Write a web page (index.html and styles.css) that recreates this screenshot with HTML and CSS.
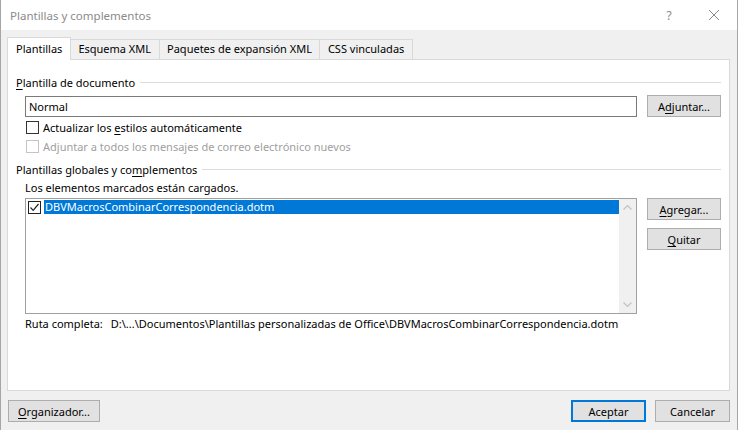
FILE: index.html
```html
<!DOCTYPE html>
<html lang="es">
<head>
<meta charset="utf-8">
<title>Plantillas y complementos</title>
<link rel="stylesheet" href="styles.css">
</head>
<body>
<div class="window">
  <div class="titlebar">
    <span class="title">Plantillas y complementos</span>
    <span class="help">?</span>
    <span class="close"><svg width="12" height="12" viewBox="0 0 12 12"><path d="M1 1 L11 11 M11 1 L1 11" stroke="#8a8a8a" stroke-width="1" fill="none"/></svg></span>
  </div>
  <div class="content">
    <div class="tabs">
      <div class="tab active">Plantillas</div>
      <div class="tab">Esquema XML</div>
      <div class="tab">Paquetes de expansión XML</div>
      <div class="tab">CSS vinculadas</div>
    </div>
    <div class="panel">
      <div class="group-head"><span><u>P</u>lantilla de documento</span><i class="rule"></i></div>
      <div class="input-row">
        <div class="textbox">Normal</div>
        <div class="btn side">A<u>d</u>juntar...</div>
      </div>
      <div class="check-row"><span class="cb"></span><span>Actualizar los <u>e</u>stilos automáticamente</span></div>
      <div class="check-row disabled"><span class="cb"></span><span>Adjuntar a todos los mensajes de correo electrónico nuevos</span></div>
      <div class="group-head second"><span>Plantillas globales y co<u>m</u>plementos</span><i class="rule"></i></div>
      <div class="desc">Los elementos marcados están cargados.</div>
      <div class="list-row">
        <div class="listbox">
          <div class="items">
            <div class="item">
              <span class="cb checked"><svg width="11" height="11" viewBox="0 0 11 11"><path d="M1.5 5.5 L4.2 8.3 L9.5 2" stroke="#222" stroke-width="1.2" fill="none"/></svg></span>
              <span class="item-text">DBVMacrosCombinarCorrespondencia.dotm</span>
            </div>
          </div>
          <div class="scrollbar">
            <svg width="17" height="17" viewBox="0 0 17 17"><path d="M4.5 10.5 L8.5 6.5 L12.5 10.5" stroke="#c2c2c2" stroke-width="1.2" fill="none"/></svg>
            <svg width="17" height="17" viewBox="0 0 17 17"><path d="M4.5 6.5 L8.5 10.5 L12.5 6.5" stroke="#c2c2c2" stroke-width="1.2" fill="none"/></svg>
          </div>
        </div>
        <div class="side-buttons">
          <div class="btn side"><u>A</u>gregar...</div>
          <div class="btn side"><u>Q</u>uitar</div>
        </div>
      </div>
      <div class="path"><span class="path-label">Ruta completa:</span><span>D:\...\Documentos\Plantillas personalizadas de Office\DBVMacrosCombinarCorrespondencia.dotm</span></div>
    </div>
    <div class="footer">
      <div class="btn organizer"><u>O</u>rganizador...</div>
      <div class="spacer"></div>
      <div class="btn primary">Aceptar</div>
      <div class="btn cancel">Cancelar</div>
    </div>
  </div>
</div>
</body>
</html>
```

FILE: styles.css
```css
* { box-sizing: border-box; }
html, body { margin: 0; padding: 0; }
body {
  width: 738px;
  height: 430px;
  overflow: hidden;
  font-family: "Noto Sans", "Open Sans", sans-serif;
  font-size: 11px;
  color: #000;
  background: #f0f0f0;
}
u { text-decoration-thickness: 1px; text-underline-offset: 2px; }

.window {
  width: 738px;
  height: 430px;
  border-left: 1px solid #a6a6a6;
  border-right: 1px solid #a6a6a6;
  display: flex;
  flex-direction: column;
}

.titlebar {
  height: 30px;
  background: #fff;
  display: flex;
  align-items: center;
  padding-left: 9px;
  color: #8a8a8a;
  font-size: 11.5px;
}
.title { flex: 1; }
.help { width: 20px; text-align: center; margin-right: 29px; font-size: 12px; }
.close { width: 12px; height: 12px; margin-right: 17px; display: flex; }

.content {
  flex: 1;
  padding: 7px 7px 0 6px;
  display: flex;
  flex-direction: column;
}

.tabs {
  display: flex;
  align-items: flex-end;
  height: 22px;
  position: relative;
  z-index: 1;
}
.tab {
  height: 20px;
  line-height: 18px;
  padding: 0 7.5px;
  border: 1px solid #d9d9d9;
  border-left: none;
  border-bottom: none;
  background: #f0f0f0;
}
.tab.active {
  height: 23px;
  margin-bottom: -1px;
  line-height: 21px;
  background: #fff;
  border-left: 1px solid #d9d9d9;
  padding: 0 7.5px 0 8px;
}

.panel {
  height: 332px;
  background: #fff;
  border: 1px solid #d9d9d9;
  padding: 13px 8px 0 8px;
  display: flex;
  flex-direction: column;
}

.group-head {
  height: 18px;
  display: flex;
  align-items: center;
  gap: 5px;
}
.group-head.second { margin-top: 4px; }
.rule {
  flex: 1;
  height: 1px;
  background: #dcdcdc;
  margin-top: 1px;
}

.input-row {
  margin-top: 4px;
  padding-left: 9px;
  display: flex;
  align-items: flex-start;
  gap: 10px;
}
.textbox {
  flex: 1;
  height: 21px;
  margin-top: 1px;
  border: 1px solid #7a7a7a;
  line-height: 19px;
  padding-left: 3px;
}

.btn {
  height: 22px;
  background: #e1e1e1;
  border: 1px solid #adadad;
  display: flex;
  align-items: center;
  justify-content: center;
}
.btn.side { width: 74px; }

.check-row {
  margin-top: 1px;
  padding-left: 10px;
  height: 19px;
  display: flex;
  align-items: center;
  gap: 4px;
}
.check-row + .check-row { margin-top: 0; }
.cb {
  width: 13px;
  height: 13px;
  border: 1px solid #333;
  background: #fff;
  flex: none;
  display: flex;
  align-items: center;
  justify-content: center;
}
.check-row.disabled { color: #a0a0a0; }
.check-row.disabled .cb { border-color: #c4c4c4; }

.desc {
  height: 20px;
  line-height: 20px;
  padding-left: 9px;
}

.list-row {
  padding-left: 9px;
  display: flex;
  gap: 10px;
  align-items: flex-start;
}
.listbox {
  flex: 1;
  height: 116px;
  border: 1px solid #a0a0a0;
  display: flex;
}
.items {
  flex: 1;
  padding-top: 1px;
}
.item {
  height: 14px;
  display: flex;
  align-items: center;
  padding-left: 2px;
}
.item .cb { border-color: #222; }
.item-text {
  flex: 1;
  height: 14px;
  margin-left: 3px;
  line-height: 14px;
  padding-left: 1px;
  background: #0078d7;
  color: #fff;
}
.scrollbar {
  width: 17px;
  background: #f0f0f0;
  display: flex;
  flex-direction: column;
  justify-content: space-between;
}
.side-buttons {
  display: flex;
  flex-direction: column;
  gap: 8px;
}

.path {
  height: 20px;
  line-height: 20px;
  padding-left: 9px;
  display: flex;
  gap: 8px;
}

.footer {
  height: 39px;
  display: flex;
  align-items: flex-start;
  padding-top: 9px;
  padding-left: 1px;
  gap: 9px;
}
.spacer { flex: 1; }
.btn.organizer { width: 92px; }
.btn.primary { width: 75px; border: 2px solid #0078d7; }
.btn.cancel { width: 75px; }
```
